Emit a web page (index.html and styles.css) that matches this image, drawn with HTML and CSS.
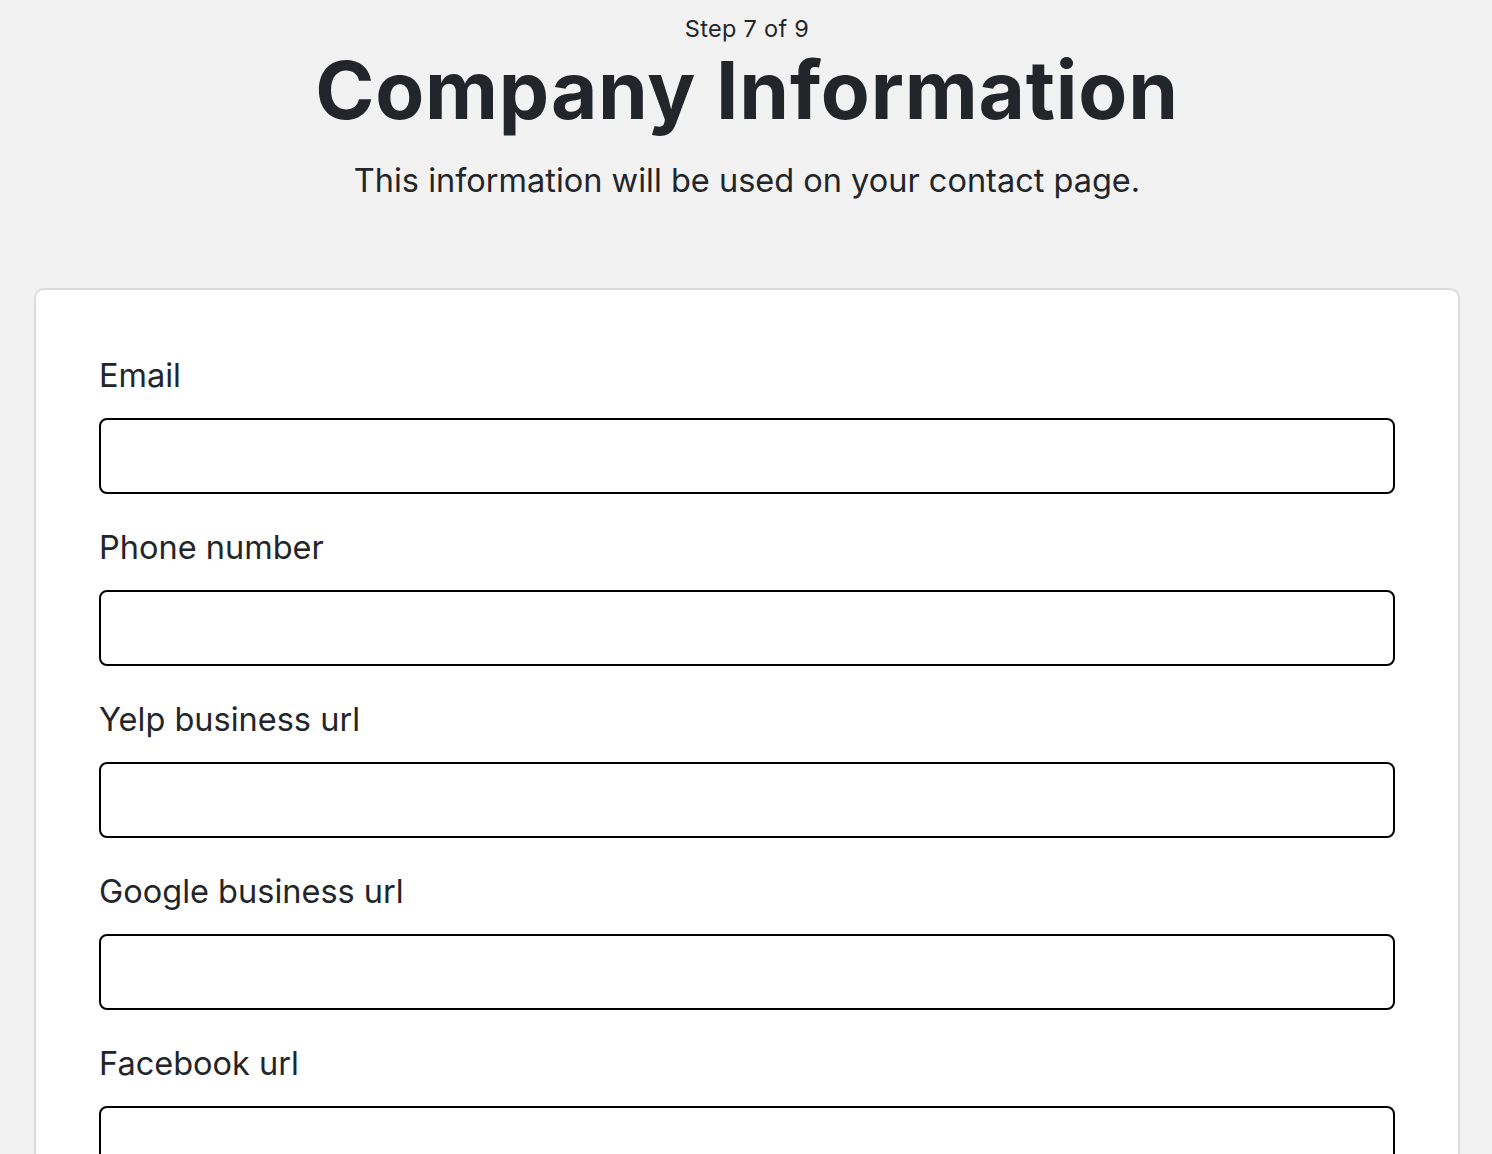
FILE: index.html
```html
<!DOCTYPE html>
<html lang="en">
<head>
<meta charset="utf-8">
<title>Company Information</title>
<link rel="stylesheet" href="styles.css">
</head>
<body>
<header class="intro">
  <div class="step">Step 7 of 9</div>
  <h1 class="title">Company Information</h1>
  <p class="lead">This information will be used on your contact page.</p>
</header>
<main class="card">
  <form class="form">
    <label class="field">
      <span class="label">Email</span>
      <input class="input" type="text">
    </label>
    <label class="field">
      <span class="label">Phone number</span>
      <input class="input" type="text">
    </label>
    <label class="field">
      <span class="label">Yelp business url</span>
      <input class="input" type="text">
    </label>
    <label class="field">
      <span class="label">Google business url</span>
      <input class="input" type="text">
    </label>
    <label class="field">
      <span class="label">Facebook url</span>
      <input class="input" type="text">
    </label>
  </form>
</main>
</body>
</html>
```
FILE: styles.css
```css
html, body {
  margin: 0;
  padding: 0;
}
body {
  background: #f2f2f2;
  font-family: "Inter", "Lato", sans-serif;
  color: #22252a;
  padding: 0 32px 0 34px;
  overflow: hidden;
  height: 1154px;
}
.intro {
  text-align: center;
  padding-top: 17px;
}
.step {
  font-size: 23.5px;
  line-height: 24px;
  letter-spacing: 0.3px;
}
.title {
  margin: 0;
  font-size: 80px;
  line-height: 98px;
  font-weight: 700;
  letter-spacing: 0.8px;
}
.lead {
  margin: 20px 0 0;
  font-size: 32.5px;
  line-height: 44px;
}
.card {
  margin-top: 85px;
  background: #fff;
  border: 2px solid #dcdcdc;
  border-radius: 10px;
  padding: 66px 63px 40px;
}
.form {
  display: flex;
  flex-direction: column;
  gap: 34px;
}
.field {
  display: flex;
  flex-direction: column;
  gap: 22px;
}
.label {
  font-size: 32.5px;
  line-height: 40px;
}
.input {
  box-sizing: border-box;
  height: 76px;
  width: 100%;
  border: 2px solid #000;
  border-radius: 8px;
  background: #fff;
  font: inherit;
  margin: 0;
}
```
